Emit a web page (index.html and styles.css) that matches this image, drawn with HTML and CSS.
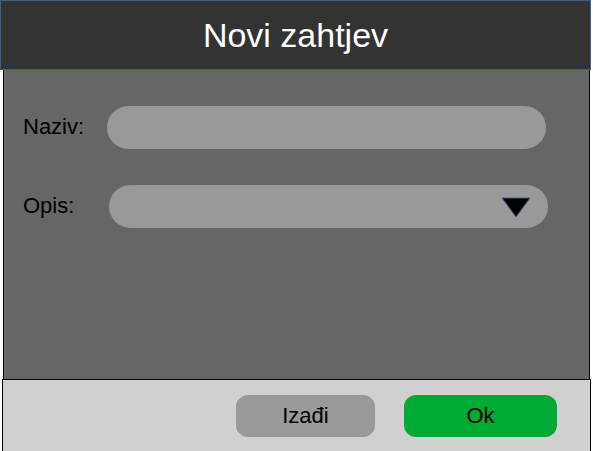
FILE: index.html
```html
<!DOCTYPE html>
<html>
<head>
<meta charset="utf-8">
<link rel="stylesheet" href="styles.css">
</head>
<body>
<div class="dialog">
  <div class="header">Novi zahtjev</div>
  <div class="content">
    <div class="row">
      <span class="label">Naziv:</span>
      <div class="field"></div>
    </div>
    <div class="row">
      <span class="label">Opis:</span>
      <div class="field select">
        <svg class="arrow" width="30" height="21" viewBox="0 0 30 21">
          <polygon points="1,1 29,1 15,20" fill="#000" stroke="#3d5f8c" stroke-width="1"/>
        </svg>
      </div>
    </div>
  </div>
  <div class="footer">
    <button class="btn btn-exit">Izađi</button>
    <button class="btn btn-ok">Ok</button>
  </div>
</div>
</body>
</html>
```
FILE: styles.css
```css
html, body {
  margin: 0;
  padding: 0;
  background: #fff;
  font-family: "Liberation Sans", Arial, sans-serif;
}
.dialog {
  width: 591px;
  height: 451px;
  display: flex;
  flex-direction: column;
  overflow: hidden;
}
.header {
  height: 68px;
  flex-shrink: 0;
  background: #333333;
  border: 1px solid #3d5f8c;
  color: #fff;
  font-size: 34px;
  display: flex;
  align-items: center;
  justify-content: center;
}
.content {
  height: 309px;
  flex-shrink: 0;
  margin: 0 1px 0 3px;
  background: #666666;
  border-left: 1px solid #000;
  border-right: 1px solid #000;
  padding: 36px 0 0 19px;
  box-sizing: border-box;
  display: flex;
  flex-direction: column;
  gap: 36px;
}
.row {
  display: flex;
  align-items: center;
}
.label {
  width: 84px;
  font-size: 22px;
  color: #000;
  padding-bottom: 1px;
}
.field {
  width: 439px;
  height: 43px;
  border-radius: 22px;
  background: #999999;
}
.select {
  margin-left: 2px;
  display: flex;
  align-items: center;
  justify-content: flex-end;
  padding-right: 17px;
  box-sizing: border-box;
}
.arrow {
  display: block;
  margin-top: 1px;
}
.footer {
  flex: 1;
  margin-left: 2px;
  background: #d0d0d0;
  border: 1px solid #000;
  border-bottom: none;
  display: flex;
  justify-content: flex-end;
  align-items: flex-start;
  padding: 15px 33px 0 0;
  gap: 29px;
}
.btn {
  height: 42px;
  border: none;
  border-radius: 12px;
  font-family: "Liberation Sans", Arial, sans-serif;
  font-size: 22px;
  color: #000;
  padding: 0;
}
.btn-exit {
  width: 139px;
  background: #999999;
}
.btn-ok {
  width: 153px;
  background: #00aa33;
}
```
